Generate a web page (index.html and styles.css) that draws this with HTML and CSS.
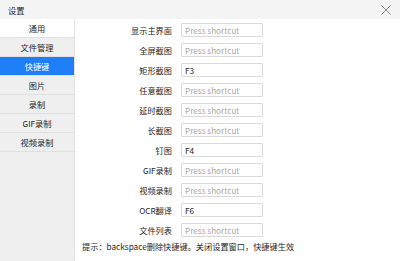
FILE: index.html
```html
<!DOCTYPE html>
<html>
<head>
<meta charset="utf-8">
<link rel="stylesheet" href="styles.css">
</head>
<body>
<div class="window">
  <div class="titlebar">
    <span class="title">设置</span>
    <svg class="close" width="10" height="10" viewBox="0 0 10 10"><path d="M0.5 0.5 L9.5 9.5 M9.5 0.5 L0.5 9.5" stroke="#8a8a8a" stroke-width="1" fill="none"/></svg>
  </div>
  <div class="main">
    <ul class="sidebar">
      <li class="item first">通用</li>
      <li class="item">文件管理</li>
      <li class="item active">快捷键</li>
      <li class="item">图片</li>
      <li class="item">录制</li>
      <li class="item">GIF录制</li>
      <li class="item">视频录制</li>
    </ul>
    <div class="content">
      <div class="row"><label>显示主界面</label><input placeholder="Press shortcut"></div>
      <div class="row"><label>全屏截图</label><input placeholder="Press shortcut"></div>
      <div class="row"><label>矩形截图</label><input value="F3"></div>
      <div class="row"><label>任意截图</label><input placeholder="Press shortcut"></div>
      <div class="row"><label>延时截图</label><input placeholder="Press shortcut"></div>
      <div class="row"><label>长截图</label><input placeholder="Press shortcut"></div>
      <div class="row"><label>钉图</label><input value="F4"></div>
      <div class="row"><label>GIF录制</label><input placeholder="Press shortcut"></div>
      <div class="row"><label>视频录制</label><input placeholder="Press shortcut"></div>
      <div class="row"><label>OCR翻译</label><input value="F6"></div>
      <div class="row"><label>文件列表</label><input placeholder="Press shortcut"></div>
      <p class="hint">提示：backspace删除快捷键。关闭设置窗口，快捷键生效</p>
    </div>
  </div>
</div>
</body>
</html>
```
FILE: styles.css
```css
html, body {
  margin: 0;
  padding: 0;
  background: #ffffff;
}
body {
  font-family: "Noto Sans CJK SC", "Noto Sans", sans-serif;
  font-size: 8.2px;
  color: #262626;
  width: 400px;
  height: 261px;
  overflow: hidden;
}
.window {
  display: flex;
  flex-direction: column;
  height: 261px;
}
.titlebar {
  height: 19px;
  background: #f4f4f4;
  display: flex;
  align-items: center;
  justify-content: space-between;
  padding: 0 9px 0 8px;
  box-sizing: border-box;
  flex: none;
}
.title {
  color: #262626;
}
.close {
  display: block;
}
.main {
  flex: 1;
  display: flex;
}
.sidebar {
  list-style: none;
  margin: 0;
  padding: 0;
  width: 74px;
  background: #efefef;
  border-right: 1px solid #e2e2e2;
  flex: none;
}
.item {
  height: 18px;
  line-height: 18px;
  text-align: center;
  border-bottom: 1px solid #e0e0e0;
  color: #262626;
}
.item.first {
  background: #ffffff;
}
.item.active {
  background: #1e7ef7;
  color: #ffffff;
}
.content {
  flex: 1;
  padding-top: 1px;
}
.row {
  height: 20px;
  display: flex;
  align-items: center;
}
.row label {
  width: 97px;
  text-align: right;
  margin-right: 9px;
  color: #262626;
}
.row input {
  width: 82px;
  height: 14px;
  box-sizing: border-box;
  border: 1px solid #dadada;
  border-radius: 1px;
  padding: 0 3px;
  font-family: "Noto Sans CJK SC", "Noto Sans", sans-serif;
  font-size: 8.2px;
  color: #262626;
  outline: none;
  background: #fff;
}
.row input::placeholder {
  color: #a8a8a8;
}
.hint {
  margin: 1px 0 0 0;
  padding-left: 7px;
  line-height: 10px;
  color: #262626;
}
```
